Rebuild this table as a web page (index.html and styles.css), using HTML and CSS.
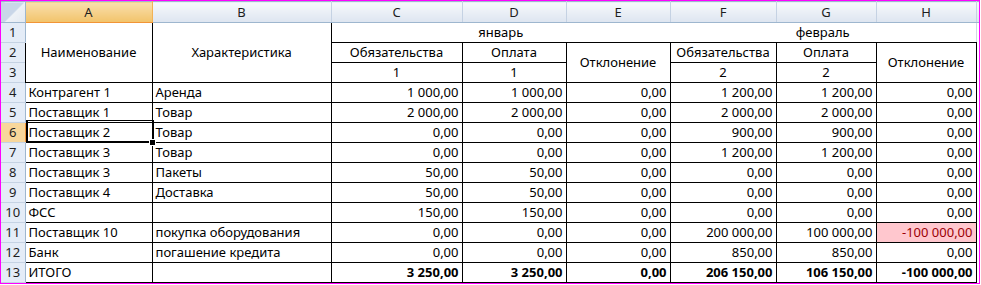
FILE: index.html
```html
<!DOCTYPE html>
<html lang="ru">
<head>
<meta charset="utf-8">
<title>Лист</title>
<link rel="stylesheet" href="styles.css">
</head>
<body>
<div class="frame">
  <table class="sheet">
    <colgroup>
      <col class="w-rh"><col class="w-a"><col class="w-b"><col class="w-c"><col class="w-d"><col class="w-e"><col class="w-f"><col class="w-g"><col class="w-h"><col class="w-i">
    </colgroup>
    <tr class="hdr">
      <th class="corner"></th>
      <th class="ch ch-sel">A</th>
      <th class="ch">B</th>
      <th class="ch">C</th>
      <th class="ch">D</th>
      <th class="ch">E</th>
      <th class="ch">F</th>
      <th class="ch">G</th>
      <th class="ch">H</th>
      <th class="ch ch-i"></th>
    </tr>
    <tr>
      <th class="rh">1</th>
      <td class="b c" rowspan="3">Наименование</td>
      <td class="b c" rowspan="3">Характеристика</td>
      <td class="top c" colspan="3">январь</td>
      <td class="top c" colspan="3">февраль</td>
      <td class="gi"></td>
    </tr>
    <tr>
      <th class="rh">2</th>
      <td class="b c">Обязательства</td>
      <td class="b c">Оплата</td>
      <td class="b c" rowspan="2">Отклонение</td>
      <td class="b c">Обязательства</td>
      <td class="b c">Оплата</td>
      <td class="b c" rowspan="2">Отклонение</td>
      <td class="gi"></td>
    </tr>
    <tr>
      <th class="rh">3</th>
      <td class="b c">1</td>
      <td class="b c">1</td>
      <td class="b c">2</td>
      <td class="b c">2</td>
      <td class="gi"></td>
    </tr>
    <tr>
      <th class="rh">4</th>
      <td class="b">Контрагент 1</td><td class="b">Аренда</td>
      <td class="b n">1 000,00</td><td class="b n">1 000,00</td><td class="b n">0,00</td>
      <td class="b n">1 200,00</td><td class="b n">1 200,00</td><td class="b n">0,00</td><td class="gi"></td>
    </tr>
    <tr>
      <th class="rh">5</th>
      <td class="b">Поставщик 1</td><td class="b">Товар</td>
      <td class="b n">2 000,00</td><td class="b n">2 000,00</td><td class="b n">0,00</td>
      <td class="b n">2 000,00</td><td class="b n">2 000,00</td><td class="b n">0,00</td><td class="gi"></td>
    </tr>
    <tr>
      <th class="rh rh-sel">6</th>
      <td class="b">Поставщик 2</td><td class="b">Товар</td>
      <td class="b n">0,00</td><td class="b n">0,00</td><td class="b n">0,00</td>
      <td class="b n">900,00</td><td class="b n">900,00</td><td class="b n">0,00</td><td class="gi"></td>
    </tr>
    <tr>
      <th class="rh">7</th>
      <td class="b">Поставщик 3</td><td class="b">Товар</td>
      <td class="b n">0,00</td><td class="b n">0,00</td><td class="b n">0,00</td>
      <td class="b n">1 200,00</td><td class="b n">1 200,00</td><td class="b n">0,00</td><td class="gi"></td>
    </tr>
    <tr>
      <th class="rh">8</th>
      <td class="b">Поставщик 3</td><td class="b">Пакеты</td>
      <td class="b n">50,00</td><td class="b n">50,00</td><td class="b n">0,00</td>
      <td class="b n">0,00</td><td class="b n">0,00</td><td class="b n">0,00</td><td class="gi"></td>
    </tr>
    <tr>
      <th class="rh">9</th>
      <td class="b">Поставщик 4</td><td class="b">Доставка</td>
      <td class="b n">50,00</td><td class="b n">50,00</td><td class="b n">0,00</td>
      <td class="b n">0,00</td><td class="b n">0,00</td><td class="b n">0,00</td><td class="gi"></td>
    </tr>
    <tr>
      <th class="rh">10</th>
      <td class="b">ФСС</td><td class="b"></td>
      <td class="b n">150,00</td><td class="b n">150,00</td><td class="b n">0,00</td>
      <td class="b n">0,00</td><td class="b n">0,00</td><td class="b n">0,00</td><td class="gi"></td>
    </tr>
    <tr>
      <th class="rh">11</th>
      <td class="b">Поставщик 10</td><td class="b">покупка оборудования</td>
      <td class="b n">0,00</td><td class="b n">0,00</td><td class="b n">0,00</td>
      <td class="b n">200 000,00</td><td class="b n">100 000,00</td><td class="b n bad">-100 000,00</td><td class="gi"></td>
    </tr>
    <tr>
      <th class="rh">12</th>
      <td class="b">Банк</td><td class="b">погашение кредита</td>
      <td class="b n">0,00</td><td class="b n">0,00</td><td class="b n">0,00</td>
      <td class="b n">850,00</td><td class="b n">850,00</td><td class="b n">0,00</td><td class="gi"></td>
    </tr>
    <tr class="total">
      <th class="rh">13</th>
      <td class="b">ИТОГО</td><td class="b"></td>
      <td class="b n bold">3 250,00</td><td class="b n bold">3 250,00</td><td class="b n bold">0,00</td>
      <td class="b n bold">206 150,00</td><td class="b n bold">106 150,00</td><td class="b n bold">-100 000,00</td><td class="gi"></td>
    </tr>
  </table>
  <div class="selbox"></div>
  <div class="handle"></div>
</div>
</body>
</html>
```

FILE: styles.css
```css
html, body {
  margin: 0;
  padding: 0;
  background: #ffffff;
}

.frame {
  position: relative;
  width: 978px;
  height: 282px;
  border: 1px solid #ff00ff;
  overflow: hidden;
  background: #ffffff;
}

.sheet {
  border-collapse: collapse;
  table-layout: fixed;
  width: 985px;
  font-family: "Noto Sans", "Open Sans", sans-serif;
  font-size: 13px;
  color: #000;
}

.w-rh { width: 24px; }
.w-a { width: 127px; }
.w-b { width: 179px; }
.w-c { width: 131px; }
.w-d { width: 104px; }
.w-e { width: 104px; }
.w-f { width: 106px; }
.w-g { width: 100px; }
.w-h { width: 100px; }
.w-i { width: 10px; }

.sheet tr { height: 20px; }
.sheet tr.hdr { height: 21px; }

.sheet td, .sheet th {
  padding: 0 3px 1px 3px;
  white-space: nowrap;
  overflow: hidden;
  vertical-align: bottom;
  line-height: 17px;
  font-weight: normal;
  text-align: left;
}

.corner {
  background: linear-gradient(135deg, #c9d6e8 0%, #c9d6e8 52%, #eef2f7 53%, #e3e9f1 100%);
  border-right: 1px solid #9eb6ce;
  border-bottom: 1px solid #9eb6ce;
  border-top: 1px solid #9eb6ce;
}

.ch {
  background: linear-gradient(#f7f9fc, #dde5f0);
  border-right: 1px solid #c5d2e3;
  border-bottom: 1px solid #9eb6ce;
  border-top: 1px solid #9eb6ce;
  text-align: center !important;
  color: #1e1e1e;
  vertical-align: middle !important;
  padding: 0 !important;
}

.ch-sel {
  background: linear-gradient(#f9e0ae, #f2c36a);
  border-bottom: 1px solid #f29436;
  border-right: 1px solid #f2b255;
}

.rh {
  background: #e4ecf7;
  border-right: 1px solid #9eb6ce;
  border-bottom: 1px solid #c5d2e3;
  text-align: center !important;
  color: #1e1e1e;
  padding: 0 0 1px 0 !important;
}

.rh-sel {
  background: #f8d79b;
  border-right: 1px solid #f29436;
}

.b {
  border: 1px solid #000;
}

.top {
  border-bottom: 1px solid #000;
}

.gi {
  border-left: 1px solid #d0d7e5;
}

.c {
  text-align: center !important;
  vertical-align: middle !important;
}

.n {
  text-align: right !important;
}

.bold {
  font-weight: bold !important;
}

.bad {
  background: #ffc7ce;
  color: #9c0006;
}

.selbox {
  position: absolute;
  left: 25px;
  top: 119px;
  width: 124px;
  height: 20px;
  border: 2px solid #000;
  border-top-width: 1px;
  pointer-events: none;
}

.handle {
  position: absolute;
  left: 148px;
  top: 138px;
  width: 5px;
  height: 5px;
  background: #000;
  border: 1px solid #fff;
}
```
